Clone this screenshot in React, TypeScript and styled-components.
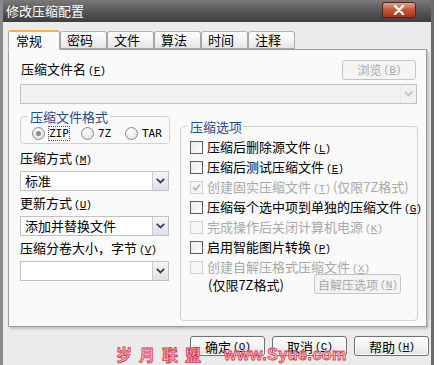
import React from "react";
import styled, { createGlobalStyle } from "styled-components";

const GlobalStyle = createGlobalStyle`
  html, body { margin: 0; padding: 0; background: #ffffff; }
  body { font-family: "Noto Sans CJK SC", "Noto Sans", sans-serif; font-size: 12px; color: #000; }
  * { box-sizing: border-box; }
`;

const Window = styled.div`
  position: relative;
  width: 434px;
  height: 365px;
  background: #ebebeb;
  border-left: 3px solid #8a8a8a;
  border-right: 3px solid #6a6a6a;
  display: flex;
  flex-direction: column;
  overflow: hidden;
`;

const TitleBar = styled.div`
  height: 22px;
  flex: none;
  margin-left: -3px;
  margin-right: -3px;
  background: linear-gradient(180deg, #7a7a7a 0%, #5a5a5a 45%, #3e3e3e 100%);
  display: flex;
  align-items: center;
  justify-content: space-between;
  padding: 0 18px 0 6px;
  color: #fff;
  font-size: 13px;
  line-height: 22px;
`;

const CloseButton = styled.div`
  width: 34px;
  height: 16px;
  margin-top: -2px;
  border: 1px solid #5a2018;
  border-radius: 3px;
  background: linear-gradient(180deg, #e3a58f 0%, #c65a3f 45%, #a7331d 100%);
  display: flex;
  align-items: center;
  justify-content: center;
`;

const Content = styled.div`
  flex: 1;
  display: flex;
  flex-direction: column;
  padding: 7px 0 0 5px;
`;

const TabRow = styled.div`
  display: flex;
  align-items: flex-end;
  height: 20px;
  position: relative;
  z-index: 1;
`;

const Tab = styled.div<{ $active?: boolean }>`
  height: ${(p) => (p.$active ? "20px" : "18px")};
  width: ${(p) => (p.$active ? "52px" : "47px")};
  padding-left: ${(p) => (p.$active ? "7px" : "6px")};
  border: 1px solid #a7a7a7;
  border-bottom: ${(p) => (p.$active ? "1px solid #fafafa" : "1px solid #a7a7a7")};
  border-top: ${(p) => (p.$active ? "2px solid #f2b34c" : "1px solid #b3b3b3")};
  border-radius: 3px 3px 0 0;
  background: ${(p) =>
    p.$active ? "#fafafa" : "linear-gradient(180deg, #fdfdfd 0%, #f1f1f1 60%, #e4e4e4 100%)"};
  margin-bottom: ${(p) => (p.$active ? "-1px" : "0")};
  font-size: 13px;
  line-height: 16px;
  display: flex;
  align-items: center;
`;

const Panel = styled.div`
  width: 419px;
  height: 278px;
  background: #fafafa;
  border: 1px solid #9d9d9d;
  box-shadow: 2px 2px 2px rgba(0, 0, 0, 0.18);
  padding: 10px 10px 0 11px;
  display: flex;
  flex-direction: column;
`;

const TopRow = styled.div`
  display: flex;
  justify-content: space-between;
  align-items: center;
  height: 19px;
  margin-left: 1px;
`;

const Label = styled.div<{ $disabled?: boolean }>`
  font-size: 12px;
  line-height: 14px;
  color: ${(p) => (p.$disabled ? "#a8a8a8" : "#000")};
  white-space: nowrap;
`;

const Key = styled.span`
  font-family: "Liberation Mono", monospace;
  font-size: 11px;
  text-decoration: underline;
  margin: 0 1px;
`;

const Paren = styled.span`
  font-family: "Liberation Sans", sans-serif;
  font-size: 11px;
  margin-left: 3px;
`;

const PushButton = styled.div<{ $disabled?: boolean; $w: number }>`
  width: ${(p) => p.$w}px;
  height: 20px;
  border: 1px solid ${(p) => (p.$disabled ? "#c4c4c4" : "#6f6f6f")};
  border-radius: 3px;
  background: ${(p) =>
    p.$disabled ? "#f4f4f4" : "linear-gradient(180deg, #ffffff 0%, #f3f3f3 50%, #e1e1e1 100%)"};
  color: ${(p) => (p.$disabled ? "#a8a8a8" : "#000")};
  display: flex;
  align-items: center;
  justify-content: center;
  font-size: 12px;
  box-shadow: ${(p) => (p.$disabled ? "none" : "inset 0 0 0 1px #ffffff")};
`;

const Combo = styled.div<{ $w: number; $disabledLook?: boolean }>`
  width: ${(p) => p.$w}px;
  height: 20px;
  border: 1px solid #c2c2c2;
  background: ${(p) => (p.$disabledLook ? "#f1f1f1" : "#ffffff")};
  display: flex;
  align-items: stretch;
  justify-content: space-between;
  padding-left: 4px;
  font-size: 13px;
  line-height: 18px;
`;

const ArrowBox = styled.div<{ $soft?: boolean }>`
  width: 16px;
  border-left: 1px solid ${(p) => (p.$soft ? "#e6e6e6" : "#c9ccd2")};
  background: ${(p) =>
    p.$soft ? "#f1f1f1" : "linear-gradient(180deg, #f4f6f9 0%, #dde1e7 100%)"};
  display: flex;
  align-items: center;
  justify-content: center;
`;

const Columns = styled.div`
  display: flex;
  gap: 10px;
  margin-top: 5px;
`;

const LeftCol = styled.div`
  width: 150px;
  display: flex;
  flex-direction: column;
`;

const Group = styled.fieldset<{ $h: number }>`
  margin: 0;
  padding: 0 0 0 9px;
  border: 1px solid #d3d3d3;
  border-radius: 4px;
  height: ${(p) => p.$h}px;
  min-width: 0;
`;

const Legend = styled.legend`
  padding: 0 2px;
  margin-left: -2px;
  color: #1f4b8f;
  font-size: 13px;
  line-height: 15px;
`;

const RadioRow = styled.div`
  display: flex;
  align-items: center;
  margin-top: 3px;
  margin-left: 2px;
`;

const RadioItem = styled.div<{ $w: number }>`
  display: flex;
  align-items: center;
  width: ${(p) => p.$w}px;
  gap: 4px;
  font-family: "DejaVu Sans Mono", monospace;
  font-size: 11px;
`;

const RadioDot = styled.div<{ $on?: boolean }>`
  width: 13px;
  height: 13px;
  border-radius: 50%;
  border: 1px solid #8b8b8b;
  background: radial-gradient(circle at 40% 35%, #ffffff 0%, #e6e6e6 70%, #cfcfcf 100%);
  display: flex;
  align-items: center;
  justify-content: center;
  &::after {
    content: "";
    display: ${(p) => (p.$on ? "block" : "none")};
    width: 5px;
    height: 5px;
    border-radius: 50%;
    background: #8a8a8a;
  }
`;

const FocusText = styled.span`
  outline: 1px dotted #555;
  outline-offset: 0;
`;

const FieldLabel = styled(Label)`
  margin-top: 5px;
  margin-bottom: 4px;
  font-size: 13px;
  line-height: 14px;
`;

const FirstFieldLabel = styled(FieldLabel)`
  margin-top: 7px;
`;

const RightGroup = styled(Group)`
  flex: none;
  width: 238px;
  margin-top: 10px;
  padding: 7px 0 0 9px;
`;

const CheckList = styled.div`
  display: flex;
  flex-direction: column;
  gap: 7px;
`;

const CheckRow = styled.div`
  display: flex;
  align-items: center;
  gap: 4px;
  height: 13px;
  font-size: 13px;
`;

const Box = styled.div<{ $disabled?: boolean }>`
  width: 13px;
  height: 13px;
  flex: none;
  border: 1px solid ${(p) => (p.$disabled ? "#d2d2d2" : "#5f5f5f")};
  background: ${(p) =>
    p.$disabled ? "#f6f6f6" : "linear-gradient(135deg, #e9e9e9 0%, #ffffff 100%)"};
  display: flex;
  align-items: center;
  justify-content: center;
`;

const CheckText = styled.span<{ $disabled?: boolean }>`
  color: ${(p) => (p.$disabled ? "#a9a9a9" : "#000")};
  white-space: nowrap;
  line-height: 13px;
`;

const NoteRow = styled.div`
  display: flex;
  align-items: center;
  justify-content: space-between;
  margin-top: 0;
  padding-left: 18px;
  padding-right: 16px;
  font-size: 13px;
`;

const ButtonBar = styled.div`
  display: flex;
  justify-content: flex-end;
  gap: 7px;
  margin-top: 9px;
  padding-right: 2px;
`;

const DialogButton = styled(PushButton)`
  height: 20px;
  border-color: #707070;
  border-radius: 3px;
  font-size: 13px;
`;

const Watermark = styled.div`
  position: absolute;
  left: 113px;
  top: 346px;
  display: flex;
  gap: 16px;
  align-items: center;
  font-size: 16px;
  font-weight: bold;
  color: #f5c0c8;
  -webkit-text-stroke: 0.8px #d8374f;
  white-space: nowrap;
  line-height: 17px;
  pointer-events: none;
`;

const WmChars = styled.span`
  letter-spacing: 7px;
`;

const WmLatin = styled.span`
  font-family: "Liberation Sans", sans-serif;
  font-size: 16px;
  letter-spacing: 0.5px;
`;

const Chevron = ({ color = "#2f3f66" }: { color?: string }) => (
  <svg width="9" height="6" viewBox="0 0 9 6">
    <path d="M0.8 0.8 L4.5 4.5 L8.2 0.8" fill="none" stroke={color} strokeWidth="1.8" />
  </svg>
);

const Tick = () => (
  <svg width="9" height="9" viewBox="0 0 9 9">
    <path d="M1 4.5 L3.5 7 L8 1.5" fill="none" stroke="#b0b0b0" strokeWidth="1.6" />
  </svg>
);

const CloseX = () => (
  <svg width="12" height="10" viewBox="0 0 12 10">
    <path d="M2 1 L10 9 M10 1 L2 9" stroke="#ffffff" strokeWidth="2.4" strokeLinecap="round" />
  </svg>
);

const Mn = ({ k }: { k: string }) => (
  <Paren>
    (<Key>{k}</Key>)
  </Paren>
);

type Opt = { text: React.ReactNode; checked?: boolean; disabled?: boolean };

const options: Opt[] = [
  { text: <>压缩后删除源文件<Mn k="L" /></> },
  { text: <>压缩后测试压缩文件<Mn k="E" /></> },
  { text: <>创建固实压缩文件<Mn k="T" /> (仅限7Z格式)</>, checked: true, disabled: true },
  { text: <>压缩每个选中项到单独的压缩文件<Mn k="G" /></> },
  { text: <>完成操作后关闭计算机电源<Mn k="K" /></>, disabled: true },
  { text: <>启用智能图片转换<Mn k="P" /></> },
  { text: <>创建自解压格式压缩文件<Mn k="X" /></>, disabled: true },
];

const tabs = ["常规", "密码", "文件", "算法", "时间", "注释"];

export default function App() {
  return (
    <>
      <GlobalStyle />
      <Window>
        <TitleBar>
          <span>修改压缩配置</span>
          <CloseButton>
            <CloseX />
          </CloseButton>
        </TitleBar>
        <Content>
          <TabRow>
            {tabs.map((t, i) => (
              <Tab key={t} $active={i === 0}>
                {t}
              </Tab>
            ))}
          </TabRow>
          <Panel>
            <TopRow>
              <Label style={{ fontSize: 13 }}>
                压缩文件名<Mn k="F" />
              </Label>
              <PushButton $disabled $w={74}>
                浏览<Mn k="B" />
              </PushButton>
            </TopRow>
            <Combo $w={397} $disabledLook style={{ marginTop: 5 }}>
              <span />
              <ArrowBox $soft>
                <Chevron color="#b8c2d4" />
              </ArrowBox>
            </Combo>
            <Columns>
              <LeftCol>
                <Group $h={35}>
                  <Legend>压缩文件格式</Legend>
                  <RadioRow>
                    <RadioItem $w={50}>
                      <RadioDot $on />
                      <FocusText>ZIP</FocusText>
                    </RadioItem>
                    <RadioItem $w={45}>
                      <RadioDot />
                      7Z
                    </RadioItem>
                    <RadioItem $w={45}>
                      <RadioDot />
                      TAR
                    </RadioItem>
                  </RadioRow>
                </Group>
                <FirstFieldLabel>
                  压缩方式<Mn k="M" />
                </FirstFieldLabel>
                <Combo $w={149}>
                  <span>标准</span>
                  <ArrowBox>
                    <Chevron />
                  </ArrowBox>
                </Combo>
                <FieldLabel>
                  更新方式<Mn k="U" />
                </FieldLabel>
                <Combo $w={149}>
                  <span>添加并替换文件</span>
                  <ArrowBox>
                    <Chevron />
                  </ArrowBox>
                </Combo>
                <FieldLabel>
                  压缩分卷大小，字节<Mn k="V" />
                </FieldLabel>
                <Combo $w={149}>
                  <span />
                  <ArrowBox>
                    <Chevron />
                  </ArrowBox>
                </Combo>
              </LeftCol>
              <RightGroup $h={202}>
                <Legend>压缩选项</Legend>
                <CheckList>
                  {options.map((o, i) => (
                    <CheckRow key={i}>
                      <Box $disabled={o.disabled}>{o.checked && <Tick />}</Box>
                      <CheckText $disabled={o.disabled}>{o.text}</CheckText>
                    </CheckRow>
                  ))}
                </CheckList>
                <NoteRow>
                  <span>(仅限7Z格式)</span>
                  <PushButton $disabled $w={87}>
                    自解压选项<Mn k="N" />
                  </PushButton>
                </NoteRow>
              </RightGroup>
            </Columns>
          </Panel>
          <ButtonBar>
            <DialogButton $w={75}>
              确定<Mn k="O" />
            </DialogButton>
            <DialogButton $w={75}>
              取消<Mn k="C" />
            </DialogButton>
            <DialogButton $w={75}>
              帮助<Mn k="H" />
            </DialogButton>
          </ButtonBar>
        </Content>
        <Watermark>
          <WmChars>岁月联盟</WmChars>
          <WmLatin>www.Syue.com</WmLatin>
        </Watermark>
      </Window>
    </>
  );
}
